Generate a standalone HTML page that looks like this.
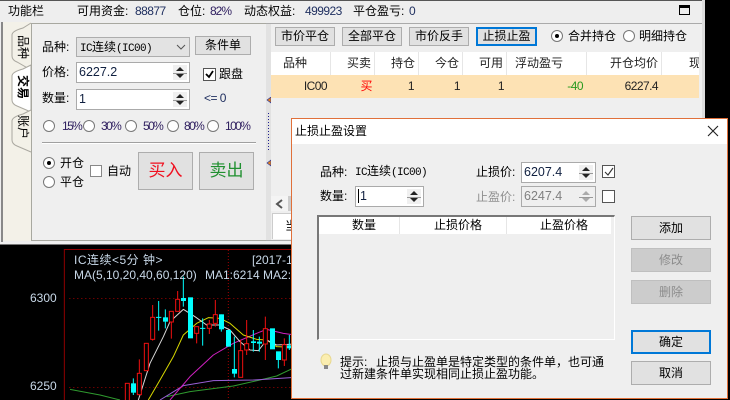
<!DOCTYPE html>
<html><head><meta charset="utf-8">
<style>
html,body{margin:0;padding:0;width:730px;height:400px;overflow:hidden;background:#000}
body{position:relative;font-family:"Liberation Sans","WenQuanYi Zen Hei","Noto Sans CJK SC",sans-serif;font-size:12px;color:#000}
.a,.t,.b,.i,.r,.c{position:absolute;box-sizing:border-box}
.t{white-space:nowrap;line-height:16px;height:16px}
.n{font-size:12px;letter-spacing:-.55px;color:#203060}
.pc{font-size:12px;letter-spacing:-1.6px;color:#302060}
.m{font-family:"Liberation Mono","WenQuanYi Zen Hei",monospace;font-size:11px;letter-spacing:-.6px}
.b{background:#e1e1e1;border:1px solid #adadad;text-align:center;line-height:18px;white-space:nowrap}
.i{background:#fff;border:1px solid #aaa;padding-left:2px;font-size:12.5px;line-height:19px;white-space:nowrap;color:#102040}
.r{width:12px;height:12px;border-radius:50%;border:1px solid #777;background:#fff}
.r.on:after{content:"";position:absolute;left:3px;top:3px;width:4px;height:4px;border-radius:50%;background:#000}
.c{width:13px;height:13px;border:1px solid #555;background:#fff}
.sp{position:absolute;right:2px;top:2px;bottom:2px;width:14px;background:#f0f0f0;color:#222}
.sp:before{content:"";position:absolute;left:3px;top:2px;border:4px solid transparent;border-top:0;border-bottom:4px solid currentColor}
.sp:after{content:"";position:absolute;left:3px;bottom:2px;border:4px solid transparent;border-bottom:0;border-top:4px solid currentColor}
.sp i{position:absolute;left:0;right:0;top:50%;height:1px;background:#999}
.h{color:#222;background:#fff;height:23px;line-height:23px;position:absolute;top:52px;text-align:right;white-space:nowrap;box-sizing:border-box;padding-right:3px;border-right:1px solid #e6e6e6;overflow:hidden}
.d{position:absolute;top:75px;height:23px;line-height:23px;text-align:right;white-space:nowrap;color:#222;font-size:12px;letter-spacing:-.55px}
.v{writing-mode:vertical-rl;text-orientation:sideways;position:absolute;line-height:12px;font-size:12px;white-space:nowrap}
</style></head><body>

<!-- main window -->
<div class="a" style="left:0;top:0;width:705px;height:244px;background:#eee;border-top:1px solid #555"></div>
<div class="t" style="left:8px;top:3px">功能栏</div>
<div class="t" style="left:77px;top:3px">可用资金:</div><div class="t n" style="left:135px;top:3px">88877</div>
<div class="t" style="left:178px;top:3px">仓位:</div><div class="t n" style="left:210px;top:3px;letter-spacing:-1px;color:#302060">82%</div>
<div class="t" style="left:244px;top:3px">动态权益:</div><div class="t n" style="left:305px;top:3px">499923</div>
<div class="t" style="left:353px;top:3px">平仓盈亏:</div><div class="t n" style="left:409px;top:3px">0</div>
<svg class="a" style="left:679px;top:5px" width="12" height="11"><rect x=".5" y=".5" width="10" height="9" fill="none" stroke="#000"/><rect x="0" y="0" width="11" height="3" fill="#000"/></svg>

<!-- left panel -->
<div class="a" style="left:1px;top:22px;width:2px;height:220px;background:#888"></div>
<div class="a" style="left:3px;top:22px;width:28px;height:219px;background:#f3f1e8"></div>
<div class="a" style="left:31px;top:23px;width:240px;height:218px;background:#efefef;border-left:1px solid #a8a8a0;border-top:1px solid #a8a8a0;border-bottom:1px solid #a8a8a0"></div>
<div class="a" style="left:266px;top:23px;width:436px;height:218px;background:#efefef;border-top:1px solid #aaa;border-bottom:1px solid #aaa"></div>
<svg class="a" style="left:10px;top:22px" width="23" height="200">
<path d="M21 1 L13 6 Q2 9 2 13 L2 34 Q2 38 7 40 L21 48" fill="#f3f1e8" stroke="#aaa8a0"/>
<path d="M21 43 L13 47 Q2 50 2 54 L2 78 Q2 82 7 84 L21 90 Z" fill="#fff" stroke="#aaa8a0"/>
<path d="M21 88 L13 92 Q2 95 2 99 L2 118 Q2 122 7 124 L21 130" fill="#f3f1e8" stroke="#aaa8a0"/>
</svg>
<div class="v" style="left:17px;top:35px">品种</div>
<div class="v" style="left:17px;top:75px;font-weight:bold">交易</div>
<div class="v" style="left:17px;top:115px">账户</div>

<div class="t" style="left:42px;top:39px">品种:</div>
<div class="a" style="left:76px;top:37px;width:114px;height:20px;background:#e3e3e3;border:1px solid #adadad;line-height:18px;padding-left:3px;white-space:nowrap"><span class="m">IC</span>连续<span class="m">(IC00)</span></div>
<svg class="a" style="left:176px;top:44px" width="11" height="7"><path d="M1 1 L5 5 L9 1" fill="none" stroke="#555"/></svg>
<div class="b" style="left:195px;top:36px;width:56px;height:19px;line-height:16px">条件单</div>

<div class="t" style="left:42px;top:64px">价格:</div>
<div class="i" style="left:76px;top:62px;width:114px;height:21px">6227.2<div class="sp"><i></i></div></div>
<div class="c" style="left:203px;top:68px"></div>
<svg class="a" style="left:204px;top:69px" width="12" height="12"><path d="M2 5 L5 8 L9 2" fill="none" stroke="#000" stroke-width="1.8"/></svg>
<div class="t" style="left:219px;top:66px">跟盘</div>

<div class="t" style="left:42px;top:90px">数量:</div>
<div class="i" style="left:76px;top:89px;width:114px;height:21px">1<div class="sp"><i></i></div></div>
<div class="t n" style="left:204px;top:90px">&lt;= 0</div>

<div class="r" style="left:43px;top:120px"></div><div class="t pc" style="left:62px;top:118px">15%</div>
<div class="r" style="left:83px;top:120px"></div><div class="t pc" style="left:101px;top:118px">30%</div>
<div class="r" style="left:125px;top:120px"></div><div class="t pc" style="left:143px;top:118px">50%</div>
<div class="r" style="left:167px;top:120px"></div><div class="t pc" style="left:184px;top:118px">80%</div>
<div class="r" style="left:207px;top:120px"></div><div class="t pc" style="left:225px;top:118px">100%</div>
<div class="a" style="left:42px;top:142px;width:214px;height:1px;background:#a0a0a0"></div>
<div class="a" style="left:42px;top:143px;width:214px;height:1px;background:#fff"></div>

<div class="r on" style="left:43px;top:157px"></div><div class="t" style="left:60px;top:155px">开仓</div>
<div class="r" style="left:43px;top:176px"></div><div class="t" style="left:60px;top:174px">平仓</div>
<div class="c" style="left:90px;top:165px;border-color:#888;width:12px;height:12px"></div>
<div class="t" style="left:107px;top:163px">自动</div>
<div class="b" style="left:138px;top:152px;width:55px;height:38px;line-height:36px;font-size:17px;color:#f01020">买入</div>
<div class="b" style="left:199px;top:152px;width:55px;height:38px;line-height:36px;font-size:17px;color:#209030">卖出</div>

<!-- splitter -->
<div class="a" style="left:266px;top:24px;width:5px;height:216px;background:#e2e2e2"></div>
<svg class="a" style="left:266px;top:97px" width="5" height="72"><path d="M5 0 L1 3 L5 6 Z" fill="#e08020" stroke="#2030a0" stroke-width=".6"/><path d="M5 63 L1 66 L5 69 Z" fill="#e08020" stroke="#2030a0" stroke-width=".6"/><line x1="2.5" y1="16" x2="2.5" y2="55" stroke="#202090" stroke-dasharray="1 2"/></svg>

<!-- right top buttons -->
<div class="b" style="left:275px;top:27px;width:60px;height:19px;line-height:17px">市价平仓</div>
<div class="b" style="left:342px;top:27px;width:60px;height:19px;line-height:17px">全部平仓</div>
<div class="b" style="left:409px;top:27px;width:60px;height:19px;line-height:17px">市价反手</div>
<div class="b" style="left:476px;top:27px;width:61px;height:19px;line-height:15px;border:2px solid #0078d7">止损止盈</div>
<div class="r on" style="left:551px;top:30px"></div><div class="t" style="left:568px;top:28px">合并持仓</div>
<div class="r" style="left:623px;top:30px"></div><div class="t" style="left:639px;top:28px">明细持仓</div>

<!-- table -->
<div class="a" style="left:271px;top:52px;width:428px;height:23px;background:#fff"></div>
<div class="h" style="left:271px;width:60px;text-align:left;padding-left:12px">品种</div>
<div class="h" style="left:331px;width:44px">买卖</div>
<div class="h" style="left:375px;width:44px">持仓</div>
<div class="h" style="left:419px;width:44px">今仓</div>
<div class="h" style="left:463px;width:44px">可用</div>
<div class="h" style="left:507px;width:80px;text-align:left;padding-left:8px">浮动盈亏</div>
<div class="h" style="left:587px;width:75px">开仓均价</div>
<div class="h" style="left:662px;width:37px;border:0;padding-right:0;text-align:left;padding-left:27px">现价</div>
<div class="a" style="left:271px;top:75px;width:428px;height:23px;background:#fde2b4"></div>
<div class="d" style="left:271px;width:56px">IC00</div>
<div class="d" style="left:331px;width:41px;color:#f00;font-size:12px">买</div>
<div class="d" style="left:375px;width:39px">1</div>
<div class="d" style="left:419px;width:41px">1</div>
<div class="d" style="left:463px;width:41px">1</div>
<div class="d" style="left:507px;width:76px;color:#2a9a20">-40</div>
<div class="d" style="left:587px;width:71px">6227.4</div>

<div class="a" style="left:271px;top:196px;width:17px;height:15px;background:#f4f4f4"></div>
<div class="a" style="left:288px;top:196px;width:4px;height:15px;background:#ccc"></div>
<svg class="a" style="left:275px;top:199px" width="9" height="10"><path d="M7 1 L2 5 L7 9" fill="none" stroke="#555" stroke-width="2"/></svg>
<div class="a" style="left:272px;top:213px;width:20px;height:26px;background:#fff;border:1px solid #ccc;border-bottom:0"></div>
<div class="t" style="left:285px;top:218px">当</div>

<!-- chart -->
<div class="a" style="left:0;top:242px;width:705px;height:2px;background:#f0f0f0"></div>
<div class="a" style="left:0;top:244px;width:705px;height:1px;background:#777"></div>
<div class="a" style="left:702px;top:0;width:3px;height:242px;background:#ddd"></div>
<svg class="a" style="left:0;top:240px" width="295" height="160">
<g transform="scale(.33333)">
<path d="M193 480V28.500H885" fill="none" stroke="#900000" stroke-width="3"/>
<path d="M685 30V480" stroke="#a00000" stroke-width="3" stroke-dasharray="3 6"/>
<path d="M208 175.500H885M208 442.500H885" stroke="#a00000" stroke-width="3" stroke-dasharray="3 9"/>
<g fill="none" stroke-width="3" stroke-linejoin="round">
<polyline stroke="#2f9a2f" points="210,448 300,465 360,480"/>
<polyline stroke="#2f9a2f" points="500,470 570,455 700,438 780,420 830,408 885,382"/>
<polyline stroke="#9a60d8" points="480,480 550,437 640,422 760,420 885,412"/>
<polyline stroke="#d020c0" points="510,480 570,410 640,345 700,310 770,280 800,268 850,280 885,285"/>
<polyline stroke="#d8d800" points="445,480 480,420 520,350 550,285 590,250 625,233 660,235 690,250 730,285 770,298 800,300 830,320 885,322"/>
<polyline stroke="#d8d8d8" points="415,480 450,370 490,290 510,245 550,208 585,230 620,255 660,255 690,270 720,305 750,330 775,332 800,300 830,315 885,312"/>
</g>
<g stroke="#00ffff" stroke-width="3" fill="#00ffff">
<path d="M400 415V465M476 183V272M468 232H484M496 208V265M550 110V200M608 235V317M600 265H616M664 223V275M703 290V412M760 270V335M778 290V335M835 360V385M868 285V330"/>
<g stroke="none">
<rect x="393" y="430" width="15" height="28"/><rect x="489" y="232" width="15" height="13"/><rect x="543" y="174" width="15" height="9"/>
<rect x="564" y="172" width="15" height="123"/><rect x="657" y="223" width="15" height="45"/><rect x="678" y="270" width="15" height="50"/>
<rect x="696" y="387" width="15" height="14"/><rect x="753" y="304" width="15" height="5"/><rect x="771" y="305" width="15" height="6"/>
<rect x="810" y="265" width="15" height="63"/><rect x="828" y="334" width="15" height="26"/><rect x="861" y="316" width="15" height="9"/>
</g></g>
<g stroke="#f01010" stroke-width="3" fill="#000">
<path d="M418 358V400M458 195V232M458 298V302M514 246V296M533 153V178M590 280V310M628 240V252M628 265V282M646 180V224M646 250V260M722 300V332M740 240V311M740 330V345M796 230V266M796 312V360M853 295V314M853 360V378" fill="none"/>
<rect x="376" y="430" width="12" height="52"/><rect x="412" y="400" width="12" height="64"/><rect x="433" y="310" width="12" height="82"/>
<rect x="452" y="232" width="12" height="66"/><rect x="508" y="214" width="12" height="32"/><rect x="527" y="178" width="12" height="36"/>
<rect x="584" y="260" width="12" height="20"/><rect x="622" y="252" width="12" height="13"/><rect x="640" y="224" width="12" height="26"/>
<rect x="716" y="332" width="12" height="80"/><rect x="734" y="311" width="12" height="19"/><rect x="790" y="266" width="12" height="46"/><rect x="847" y="314" width="12" height="46"/>
</g>
</g></svg>
<div class="t" style="left:74px;top:252px;color:#c8d8e8;letter-spacing:.5px">IC连续&lt;5分 钟&gt;</div>
<div class="t" style="left:252px;top:252px;color:#c8d8e8">[2017-1</div>
<div class="t" style="left:74px;top:267px;color:#c8d8e8">MA(5,10,20,40,60,120)</div>
<div class="t" style="left:205px;top:267px;color:#c8d8e8">MA1:6214 MA2:</div>
<div class="t" style="left:30px;top:290px;color:#c8d8e8">6300</div>
<div class="t" style="left:30px;top:378px;color:#c8d8e8">6250</div>

<!-- dialog -->
<div class="a" style="left:291px;top:118px;width:437px;height:281px;background:#efefef;border:1px solid #e0703a"></div>
<div class="a" style="left:292px;top:119px;width:435px;height:25px;background:#fff"></div>
<div class="t" style="left:295px;top:123px">止损止盈设置</div>
<svg class="a" style="left:706px;top:124px" width="14" height="14"><path d="M2 2 L12 12 M12 2 L2 12" stroke="#222" stroke-width="1.1"/></svg>

<div class="t" style="left:320px;top:164px">品种:</div>
<div class="t" style="left:355px;top:163px"><span class="m">IC</span>连续<span class="m">(IC00)</span></div>
<div class="t" style="left:476px;top:164px">止损价:</div>
<div class="i" style="left:521px;top:162px;width:75px;height:21px">6207.4<div class="sp"><i></i></div></div>
<div class="c" style="left:602px;top:165px"></div>
<svg class="a" style="left:603px;top:166px" width="12" height="12"><path d="M2 6 L5 9 L10 2" fill="none" stroke="#333" stroke-width="1.1"/></svg>

<div class="t" style="left:320px;top:188px">数量:</div>
<div class="i" style="left:355px;top:186px;width:69px;height:21px"><span style="border-left:1px solid #000;padding-left:1px">1</span><div class="sp"><i></i></div></div>
<div class="t" style="left:476px;top:189px;color:#909090">止盈价:</div>
<div class="i" style="left:521px;top:186px;width:75px;height:21px;background:#efefef;color:#808080">6247.4<div class="sp" style="color:#aaa"><i></i></div></div>
<div class="c" style="left:602px;top:190px"></div>

<div class="a" style="left:317px;top:215px;width:298px;height:125px;background:#efefef;border:1px solid #fff;border-left:2px solid #777;border-top:2px solid #777"></div>
<div class="a" style="left:319px;top:217px;width:292px;height:17px;background:#fff"></div>
<div class="a" style="left:399px;top:217px;width:1px;height:17px;background:#e6e6e6"></div>
<div class="a" style="left:506px;top:217px;width:1px;height:17px;background:#e6e6e6"></div>
<div class="t" style="left:352px;top:217px">数量</div>
<div class="t" style="left:434px;top:217px">止损价格</div>
<div class="t" style="left:540px;top:217px">止盈价格</div>

<div class="b" style="left:631px;top:216px;width:80px;height:24px;line-height:22px">添加</div>
<div class="b" style="left:631px;top:248px;width:80px;height:24px;line-height:22px;background:#ccc;border-color:#bfbfbf;color:#8c8c8c">修改</div>
<div class="b" style="left:631px;top:280px;width:80px;height:24px;line-height:22px;background:#ccc;border-color:#bfbfbf;color:#8c8c8c">删除</div>
<div class="b" style="left:631px;top:330px;width:80px;height:24px;line-height:20px;border:2px solid #0078d7">确定</div>
<div class="b" style="left:631px;top:361px;width:80px;height:24px;line-height:22px">取消</div>

<svg class="a" style="left:319px;top:353px" width="14" height="19"><ellipse cx="7" cy="7" rx="5" ry="6" fill="#fbeeb0" stroke="#e8d890"/><rect x="5" y="12" width="4" height="4" fill="#888"/></svg>
<div class="a" style="left:340px;top:356px;width:280px;line-height:12px;white-space:nowrap"><span style="display:inline-block;width:36px">提示:</span>止损与止盈单是特定类型的条件单，也可通<br>过新建条件单实现相同止损止盈功能。</div>
</body></html>
